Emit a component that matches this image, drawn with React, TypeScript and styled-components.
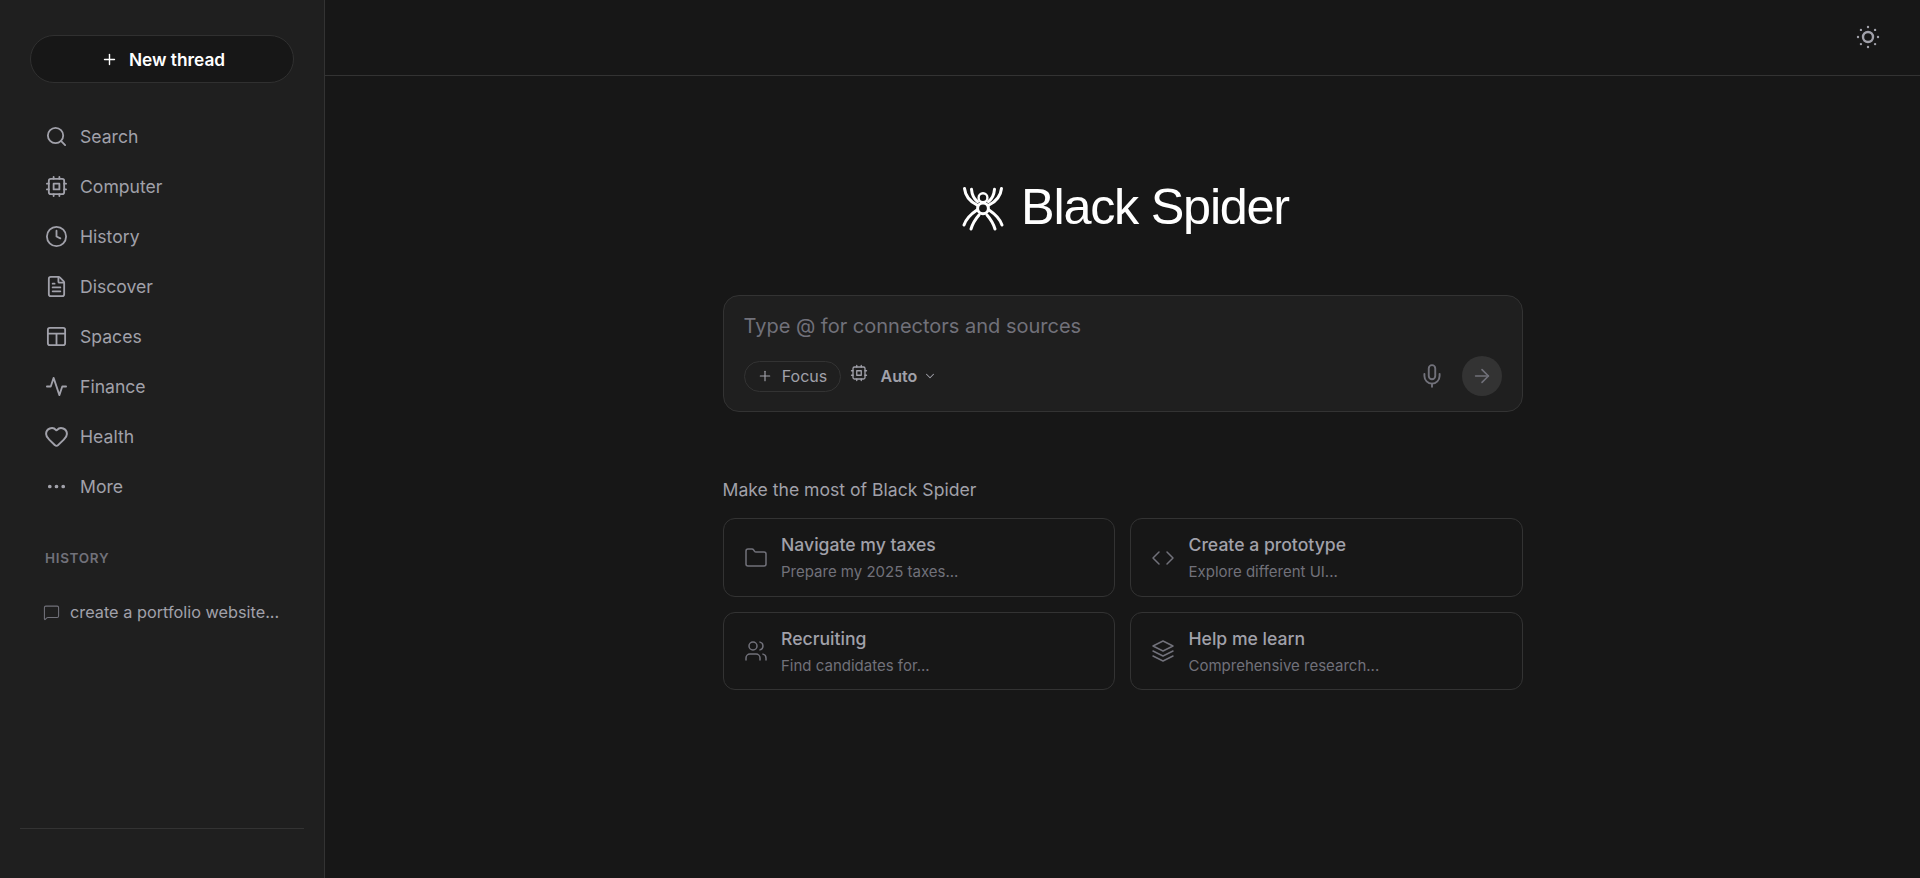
import React from 'react';
import styled, { createGlobalStyle } from 'styled-components';
import { Search, Clock, FileText, Heart, Ellipsis, MessageSquare, Plus, ChevronDown, Mic, ArrowRight, Folder, Code, Users, SunDim } from 'lucide-react';

const Global = createGlobalStyle`
  html, body { margin: 0; padding: 0; background: #171717; }
  body { font-family: Inter, "Liberation Sans", sans-serif; }
  * { box-sizing: border-box; }
`;

const Shell = styled.div`
  display: flex;
  width: 100%;
  height: 878px;
  overflow: hidden;
  background: #171717;
`;

const Sidebar = styled.aside`
  width: 325px;
  flex: none;
  display: flex;
  flex-direction: column;
  background: #1f1f1f;
  border-right: 1px solid #333333;
  padding: 35px 20px 0;
`;

const NewThread = styled.button`
  width: 264px;
  height: 48px;
  margin-left: 10px;
  padding: 0 0 0 2px;
  flex: none;
  display: flex;
  align-items: center;
  justify-content: center;
  gap: 11px;
  border-radius: 24px;
  background: #171717;
  border: 1px solid #303030;
  color: #ffffff;
  font: 600 17.3px Inter, sans-serif;
`;

const Nav = styled.nav`
  display: flex;
  flex-direction: column;
  margin-top: 28px;
  padding-left: 25px;
`;

const NavSlot = styled.span`
  width: 23px;
  height: 23px;
  flex: none;
  display: flex;
  align-items: center;
  justify-content: center;
`;

const NavItem = styled.div`
  height: 50px;
  display: flex;
  align-items: center;
  gap: 12px;
  color: #a1a1aa;
  font-size: 17.6px;
  svg { flex: none; color: #a1a1aa; }
`;

const SectionLabel = styled.div`
  margin: 39px 0 0 25px;
  color: #71717a;
  font-size: 13.5px;
  font-weight: 600;
  letter-spacing: 0.68px;
  line-height: 16px;
`;

const HistoryRow = styled.div`
  margin: 36px 0 0 23px;
  display: flex;
  align-items: center;
  gap: 10px;
  color: #a1a1aa;
  font-size: 16.3px;
  line-height: 20px;
  svg { color: #71717a; flex: none; }
`;

const SidebarRule = styled.div`
  margin-top: auto;
  margin-bottom: 49px;
  height: 1px;
  background: #333333;
`;

const Main = styled.main`
  flex: 1;
  min-width: 0;
  display: flex;
  flex-direction: column;
`;

const TopBar = styled.header`
  height: 76px;
  flex: none;
  display: flex;
  align-items: flex-start;
  justify-content: flex-end;
  padding: 22px 37px 0 0;
  border-bottom: 1px solid #333333;
  color: #a1a1aa;
`;

const Content = styled.div`
  width: 800px;
  margin: 0 auto;
  display: flex;
  flex-direction: column;
`;

const Brand = styled.div`
  margin-top: 101px;
  padding-left: 3px;
  display: flex;
  align-items: center;
  justify-content: center;
  gap: 14px;
  height: 60px;
`;

const BrandName = styled.h1`
  margin: 0;
  color: #ffffff;
  font: 400 50.4px/60px "Liberation Sans", Arial, sans-serif;
  letter-spacing: -1.26px;
`;

const Composer = styled.div`
  margin-top: 58px;
  height: 117px;
  background: #1f1f1f;
  border: 1px solid #333333;
  border-radius: 16px;
  padding: 18px 20px 0;
`;

const Placeholder = styled.div`
  color: #71717a;
  font-size: 20px;
  line-height: 24px;
`;

const ComposerRow = styled.div`
  margin-top: 18px;
  display: flex;
  align-items: center;
  height: 40px;
`;

const FocusPill = styled.div`
  height: 31px;
  width: 97px;
  display: flex;
  align-items: center;
  justify-content: center;
  gap: 9px;
  border: 1px solid #333333;
  border-radius: 16px;
  color: #a1a1aa;
  font-size: 16px;
`;

const ModelIcon = styled.span`
  display: flex;
  margin: -6px 0 0 9px;
  color: #a1a1aa;
`;

const ModelName = styled.span`
  margin-left: 13px;
  color: #a1a1aa;
  font-size: 16px;
  font-weight: 600;
`;

const ModelChevron = styled.span`
  display: flex;
  margin-left: 6px;
  color: #a1a1aa;
`;

const ComposerEnd = styled.div`
  margin-left: auto;
  display: flex;
  align-items: center;
  gap: 17px;
  color: #71717a;
`;

const SendButton = styled.div`
  width: 40px;
  height: 40px;
  border-radius: 50%;
  background: #333333;
  display: flex;
  align-items: center;
  justify-content: center;
  color: #71717a;
`;

const SectionTitle = styled.div`
  margin-top: 66px;
  color: #a1a1aa;
  font-size: 17.6px;
  line-height: 24px;
`;

const CardGrid = styled.div`
  margin-top: 16px;
  display: grid;
  grid-template-columns: 1fr 1fr;
  grid-template-rows: 79px 78px;
  gap: 15px;
`;

const Card = styled.div`
  display: flex;
  align-items: center;
  gap: 13.5px;
  padding-left: 20px;
  border: 1px solid #333333;
  border-radius: 12px;
  color: #71717a;
  svg { flex: none; }
`;

const CardText = styled.div`
  display: flex;
  flex-direction: column;
  gap: 6px;
  padding-top: 1px;
`;

const CardTitle = styled.div`
  color: #a1a1aa;
  font-size: 17.6px;
  font-weight: 500;
  line-height: 22px;
`;

const CardSub = styled.div`
  color: #71717a;
  font-size: 15px;
  line-height: 20px;
`;

const SpiderLogo = () => (
  <svg width="48" height="48" viewBox="0 0 48 48" fill="none" stroke="#fff" strokeWidth="3" strokeLinecap="round">
    <circle cx="24" cy="14.7" r="4.4" strokeWidth="2.4" />
    <circle cx="24" cy="25.3" r="5.4" strokeWidth="3" />
    <path d="M5.500 5.500c.8 7 4.500 12.500 12.500 16.500" />
    <path d="M12.500 6.300c.5 5.500 2.500 9.500 6 12.400" />
    <path d="M42.500 5.500c-.8 7-4.500 12.500-12.500 16.500" />
    <path d="M35.500 6.300c-.5 5.500-2.500 9.500-6 12.400" />
    <path d="M18 27C12 31 7 36 5 42" />
    <path d="M20 32c-3.500 4-6.500 9-8 14" />
    <path d="M30 27c6 4 11 9 13 15" />
    <path d="M28 32c3.500 4 6.500 9 8 14" />
  </svg>
);

type GlyphProps = { size?: number; strokeWidth?: number };

const Glyph = ({ size = 24, strokeWidth = 2, children }: GlyphProps & { children: React.ReactNode }) => (
  <svg width={size} height={size} viewBox="0 0 24 24" fill="none" stroke="currentColor" strokeWidth={strokeWidth} strokeLinecap="round" strokeLinejoin="round">
    {children}
  </svg>
);

const ChipIcon = (p: GlyphProps) => (
  <Glyph {...p}>
    <rect x="4" y="4" width="16" height="16" rx="2" />
    <rect x="9" y="9" width="6" height="6" />
    <path d="M15 2v2M15 20v2M2 15h2M2 9h2M20 15h2M20 9h2M9 2v2M9 20v2" />
  </Glyph>
);

const SpacesIcon = (p: GlyphProps) => (
  <Glyph {...p}>
    <rect x="3" y="3" width="18" height="18" rx="2" />
    <path d="M3 9h18M12 21V9" />
  </Glyph>
);

const PulseIcon = (p: GlyphProps) => (
  <Glyph {...p}>
    <polyline points="22 12 18 12 15 21 9 3 6 12 2 12" />
  </Glyph>
);

const LayersIcon = (p: GlyphProps) => (
  <Glyph {...p}>
    <polygon points="12 2 2 7 12 12 22 7 12 2" />
    <polyline points="2 17 12 22 22 17" />
    <polyline points="2 12 12 17 22 12" />
  </Glyph>
);

const navItems = [
  { label: 'Search', Icon: Search, size: 23 },
  { label: 'Computer', Icon: ChipIcon, size: 23 },
  { label: 'History', Icon: Clock, size: 23 },
  { label: 'Discover', Icon: FileText, size: 23 },
  { label: 'Spaces', Icon: SpacesIcon, size: 23 },
  { label: 'Finance', Icon: PulseIcon, size: 23 },
  { label: 'Health', Icon: Heart, size: 25 },
  { label: 'More', Icon: Ellipsis, size: 23 },
];

const cards = [
  { title: 'Navigate my taxes', sub: 'Prepare my 2025 taxes...', Icon: Folder },
  { title: 'Create a prototype', sub: 'Explore different UI...', Icon: Code },
  { title: 'Recruiting', sub: 'Find candidates for...', Icon: Users },
  { title: 'Help me learn', sub: 'Comprehensive research...', Icon: LayersIcon },
];

export default function App() {
  return (
    <Shell>
      <Global />
      <Sidebar>
        <NewThread><Plus size={17} strokeWidth={2} />New thread</NewThread>
        <Nav>
          {navItems.map(({ label, Icon, size }) => (
            <NavItem key={label}><NavSlot><Icon size={size} strokeWidth={1.9} /></NavSlot>{label}</NavItem>
          ))}
        </Nav>
        <SectionLabel>HISTORY</SectionLabel>
        <HistoryRow><MessageSquare size={17} strokeWidth={1.5} />create a portfolio website...</HistoryRow>
        <SidebarRule />
      </Sidebar>
      <Main>
        <TopBar><SunDim size={30} strokeWidth={1.9} /></TopBar>
        <Content>
          <Brand><SpiderLogo /><BrandName>Black Spider</BrandName></Brand>
          <Composer>
            <Placeholder>Type @ for connectors and sources</Placeholder>
            <ComposerRow>
              <FocusPill><Plus size={16} strokeWidth={1.75} />Focus</FocusPill>
              <ModelIcon><ChipIcon size={18} strokeWidth={1.75} /></ModelIcon>
              <ModelName>Auto</ModelName>
              <ModelChevron><ChevronDown size={14} strokeWidth={1.75} /></ModelChevron>
              <ComposerEnd>
                <Mic size={26} strokeWidth={1.75} />
                <SendButton><ArrowRight size={22} strokeWidth={1.75} /></SendButton>
              </ComposerEnd>
            </ComposerRow>
          </Composer>
          <SectionTitle>Make the most of Black Spider</SectionTitle>
          <CardGrid>
            {cards.map(({ title, sub, Icon }) => (
              <Card key={title}>
                <Icon size={24} strokeWidth={1.5} />
                <CardText><CardTitle>{title}</CardTitle><CardSub>{sub}</CardSub></CardText>
              </Card>
            ))}
          </CardGrid>
        </Content>
      </Main>
    </Shell>
  );
}
